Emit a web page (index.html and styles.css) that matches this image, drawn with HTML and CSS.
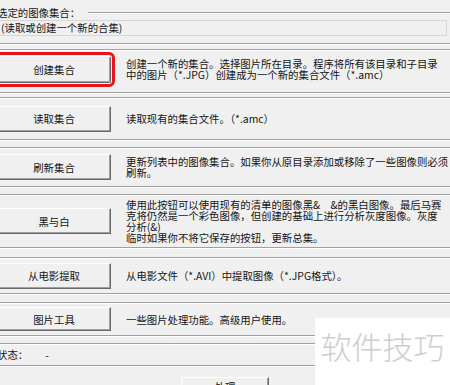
FILE: index.html
```html
<!DOCTYPE html>
<html>
<head>
    <title>图像集合</title>
    <link rel="stylesheet" href="styles.css">
</head>
<body>
    <div class="window">
        <div class="group-head">
            <span class="group-label">选定的图像集合：</span>
            <span class="group-rule"></span>
        </div>
        <div class="path-box">(读取或创建一个新的合集)</div>
        <div class="rule"></div>

        <div class="panel panel-create">
            <button class="cmd focused">创建集合</button>
            <p class="desc">创建一个新的集合。选择图片所在目录。程序将所有该目录和子目录<br>中的图片（*.JPG）创建成为一个新的集合文件（*.amc）</p>
        </div>
        <div class="panel panel-open">
            <button class="cmd">读取集合</button>
            <p class="desc">读取现有的集合文件。（*.amc）</p>
        </div>
        <div class="panel panel-refresh">
            <button class="cmd">刷新集合</button>
            <p class="desc">更新列表中的图像集合。如果你从原目录添加或移除了一些图像则必须<br>刷新。</p>
        </div>
        <div class="panel panel-mono">
            <button class="cmd">黑与白</button>
            <p class="desc">使用此按钮可以使用现有的清单的图像黑&amp;　&amp;的黑白图像。最后马赛<br>克将仍然是一个彩色图像，但创建的基础上进行分析灰度图像。灰度<br>分析(&amp;)<br>临时如果你不将它保存的按钮，更新总集。</p>
        </div>
        <div class="panel panel-movie">
            <button class="cmd">从电影提取</button>
            <p class="desc">从电影文件（*.AVI）中提取图像（*.JPG格式）。</p>
        </div>
        <div class="panel panel-tools">
            <button class="cmd">图片工具</button>
            <p class="desc">一些图片处理功能。高级用户使用。</p>
        </div>

        <div class="status-bar">
            <span class="status-label">状态：</span>
            <span class="status-value">-</span>
        </div>

        <div class="actions">
            <button class="cmd wide">处理</button>
        </div>
    </div>

    <div class="watermark">软件技巧</div>
</body>
</html>
```

FILE: styles.css
```css
body {
    margin: 0;
    width: 450px;
    height: 385px;
    overflow: hidden;
    background-color: #f0f0f0;
    color: #141414;
    font-family: "Noto Sans CJK SC", "Noto Sans", sans-serif;
    font-size: 10.4px;
}
.window {
    margin-left: -3px;
    width: 453px;
}
.group-head {
    display: flex;
    align-items: center;
    height: 12px;
    margin-top: 7px;
}
.group-label {
    line-height: 12px;
    white-space: nowrap;
}
.group-rule {
    flex: 1;
    height: 0;
    margin-left: 8px;
    border-top: 1px solid #a0a0a0;
    border-bottom: 1px solid #ffffff;
}
.path-box {
    height: 14px;
    margin: 1px 3px 0 0;
    padding-left: 3px;
    line-height: 14px;
    border: 1px solid #d6d6d6;
}
.rule {
    margin-top: 7px;
    border-top: 1px solid #a0a0a0;
    border-bottom: 1px solid #ffffff;
}

/* each command sits in its own etched strip */
.panel {
    box-sizing: border-box;
    display: flex;
    align-items: center;
    border-top: 1px solid #a0a0a0;
    border-bottom: 1px solid #a0a0a0;
    box-shadow: inset 0 1px #ffffff, 0 1px #ffffff;
}
.panel-create {
    height: 44px;
    margin-top: 4px;
    padding-bottom: 4px;
}
.panel-open {
    height: 43px;
    margin-top: 4px;
}
.panel-refresh {
    height: 40px;
    margin-top: 7px;
}
.panel-mono {
    height: 54px;
    margin-top: 7px;
}
.panel-movie {
    height: 37px;
    margin-top: 9px;
}
.panel-tools {
    height: 34px;
    margin-top: 8px;
}
.panel-tools .cmd {
    height: 24px;
}

.cmd {
    flex: none;
    width: 114px;
    height: 26px;
    margin: 0;
    padding: 0;
    background-color: #f0f0f0;
    color: #141414;
    font-family: inherit;
    font-size: 10.4px;
    border: 1px solid;
    border-color: #ffffff #696969 #696969 #ffffff;
    box-shadow: inset -1px -1px #a0a0a0;
}
.cmd.focused {
    height: 27px;
    border-radius: 2px;
    outline: 3.5px solid #e8141c;
    outline-offset: 1px;
}
.desc {
    margin: 0 0 0 15px;
    line-height: 11px;
    white-space: nowrap;
}
.status-bar {
    box-sizing: border-box;
    display: flex;
    align-items: center;
    height: 23px;
    margin-top: 7px;
    border-top: 1px solid #a0a0a0;
    border-bottom: 1px solid #a0a0a0;
    box-shadow: inset 0 1px #ffffff, 0 1px #ffffff;
}
.status-value {
    margin-left: 17px;
}
.actions {
    display: flex;
    justify-content: center;
    margin-top: 11px;
}
.cmd.wide {
    width: 88px;
    height: 20px;
    margin-left: 3px;
    line-height: 14px;
}
.watermark {
    position: absolute;
    left: 315px;
    top: 318px;
    width: 135px;
    height: 67px;
    background-color: #ffffff;
    color: #cdcdcd;
    font-size: 31px;
    font-weight: 300;
    line-height: 56px;
    text-align: center;
}
```
